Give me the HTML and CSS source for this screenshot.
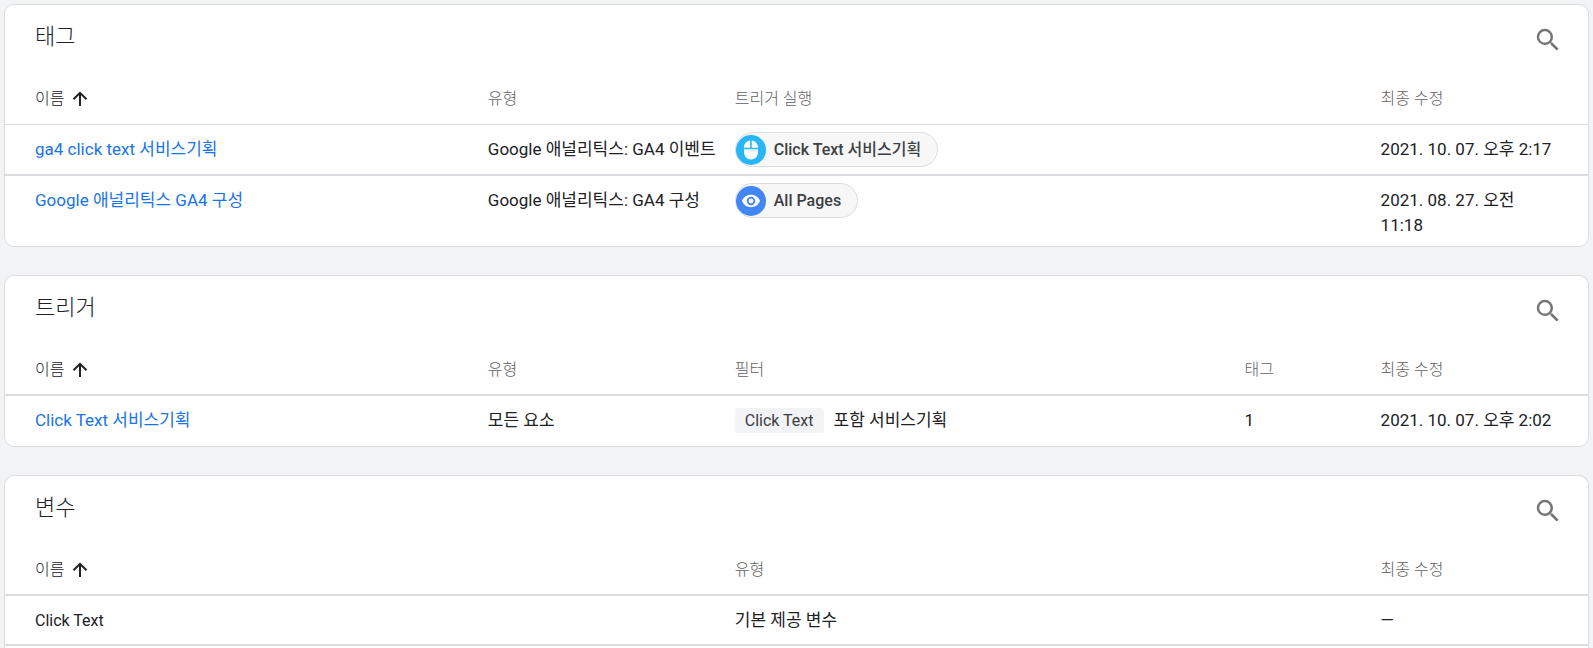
FILE: index.html
```html
<!DOCTYPE html>
<html lang="ko">
<head>
<meta charset="utf-8">
<title>태그 · 트리거 · 변수</title>
<link rel="stylesheet" href="styles.css">
</head>
<body>
<svg class="defs" aria-hidden="true">
  <symbol id="search" viewBox="0 0 24 24"><path d="M15.5 14h-.79l-.28-.27A6.47 6.47 0 0 0 16 9.5 6.5 6.5 0 1 0 9.5 16c1.61 0 3.09-.59 4.23-1.57l.27.28v.79l5 4.99L20.49 19l-4.99-5zm-6 0C7.01 14 5 11.99 5 9.5S7.01 5 9.5 5 14 7.01 14 9.5 11.99 14 9.5 14z"/></symbol>
  <symbol id="arrow" viewBox="0 0 16 16"><path d="M8 15V2M1.500 8.300 8 1.800l6.500 6.500" fill="none" stroke="currentColor" stroke-width="2"/></symbol>
</svg>
<main class="cards">
  <section class="card">
    <header class="card-head">
      <h2 class="card-title">태그</h2>
      <button class="search" type="button" aria-label="태그 검색"><svg class="search-icon"><use href="#search"/></svg></button>
    </header>
    <table class="table table-tags">
      <colgroup><col class="c-name"><col class="c-type"><col class="c-wide"><col class="c-date"></colgroup>
      <thead>
        <tr>
          <th class="sorted"><button class="sort" type="button">이름<svg class="sort-icon"><use href="#arrow"/></svg></button></th>
          <th>유형</th><th>트리거 실행</th><th>최종 수정</th>
        </tr>
      </thead>
      <tbody>
        <tr>
          <td><a class="link" href="#">ga4 click text 서비스기획</a></td>
          <td class="nowrap">Google 애널리틱스: GA4 이벤트</td>
          <td class="chip-cell"><a class="chip" href="#">
            <svg class="chip-icon" viewBox="0 0 30 30"><circle cx="15" cy="15" r="15" fill="#29b6f6"/><path fill="#fff" d="M14.200 5.500v7.200H8C8 8.700 10.500 6 14.200 5.500zM15.800 5.500c3.700.5 6.200 3.200 6.200 7.200h-6.200zM8 14.200h14v2.800c0 4.500-3 7.500-7 7.500s-7-3-7-7.500z"/></svg>
            Click Text 서비스기획</a></td>
          <td>2021. 10. 07. 오후 2:17</td>
        </tr>
        <tr>
          <td><a class="link" href="#">Google 애널리틱스 GA4 구성</a></td>
          <td class="nowrap">Google 애널리틱스: GA4 구성</td>
          <td class="chip-cell"><a class="chip" href="#">
            <svg class="chip-icon" viewBox="0 0 30 30"><circle cx="15" cy="15" r="15" fill="#4285f4"/><path fill="#fff" d="M15 8.800c-4.200 0-7.600 2.500-9 6.200 1.400 3.700 4.800 6.200 9 6.200s7.600-2.500 9-6.200c-1.400-3.700-4.800-6.200-9-6.200z"/><circle cx="15" cy="15" r="3.300" fill="#fff" stroke="#4285f4" stroke-width="1.800"/></svg>
            All Pages</a></td>
          <td>2021. 08. 27. 오전 11:18</td>
        </tr>
      </tbody>
    </table>
  </section>

  <section class="card">
    <header class="card-head">
      <h2 class="card-title">트리거</h2>
      <button class="search" type="button" aria-label="트리거 검색"><svg class="search-icon"><use href="#search"/></svg></button>
    </header>
    <table class="table">
      <colgroup><col class="c-name"><col class="c-type"><col class="c-filter"><col class="c-count"><col class="c-date"></colgroup>
      <thead>
        <tr>
          <th class="sorted"><button class="sort" type="button">이름<svg class="sort-icon"><use href="#arrow"/></svg></button></th>
          <th>유형</th><th>필터</th><th>태그</th><th>최종 수정</th>
        </tr>
      </thead>
      <tbody>
        <tr>
          <td><a class="link" href="#">Click Text 서비스기획</a></td>
          <td>모든 요소</td>
          <td><span class="filter"><span class="token">Click Text</span>포함 서비스기획</span></td>
          <td>1</td>
          <td>2021. 10. 07. 오후 2:02</td>
        </tr>
      </tbody>
    </table>
  </section>

  <section class="card card-open">
    <header class="card-head">
      <h2 class="card-title">변수</h2>
      <button class="search" type="button" aria-label="변수 검색"><svg class="search-icon"><use href="#search"/></svg></button>
    </header>
    <table class="table">
      <colgroup><col class="c-variable"><col class="c-wide"><col class="c-date"></colgroup>
      <thead>
        <tr>
          <th class="sorted"><button class="sort" type="button">이름<svg class="sort-icon"><use href="#arrow"/></svg></button></th>
          <th>유형</th><th>최종 수정</th>
        </tr>
      </thead>
      <tbody>
        <tr><td class="latin">Click Text</td><td>기본 제공 변수</td><td>—</td></tr>
      </tbody>
    </table>
  </section>
</main>
</body>
</html>
```
FILE: styles.css
```css
* { box-sizing: border-box; }

body {
  margin: 0;
  background: #f1f3f4;
  color: #202124;
  font: 17px/25px Roboto, "Noto Sans CJK KR", sans-serif;
}

.defs { display: none; }

.cards {
  display: flex;
  flex-direction: column;
  gap: 28px;
  padding: 4px 4px 0;
}

.card {
  background: #fff;
  border: 1px solid #dadce0;
  border-radius: 10px;
  overflow: hidden;
}

.card-open {
  padding-bottom: 2px;
  border-bottom: 0;
  border-radius: 10px 10px 0 0;
}

.card-head {
  display: flex;
  justify-content: space-between;
  align-items: flex-start;
  padding: 20px 25px 19px 30px;
}

.card-title {
  margin: 0;
  font-size: 22px;
  font-weight: 300;
  line-height: 24px;
}

button {
  padding: 0;
  border: 0;
  background: none;
  color: inherit;
  font: inherit;
  cursor: pointer;
}

.search {
  width: 30px;
  height: 30px;
  color: #757575;
}

.search-icon {
  display: block;
  width: 30px;
  height: 30px;
  fill: currentColor;
}

.table {
  width: 100%;
  table-layout: fixed;
  border-collapse: separate;
  border-spacing: 0;
}

.c-name { width: 30.5%; }
.c-type { width: 15.6%; }
.c-filter { width: 32.2%; }
.c-count { width: 8.6%; }
.c-variable { width: 46.1%; }
.c-wide { width: 40.8%; }
.c-date { width: 13.1%; }

th {
  height: 51px;
  padding: 12px 12px 0 0;
  border-bottom: 2px solid #dadce0;
  color: #616161;
  font-size: 16px;
  font-weight: 300;
  text-align: left;
  vertical-align: top;
}

.table-tags th { border-bottom-width: 1px; }

th.sorted { color: #202124; }

td {
  height: 50px;
  padding: 12px 12px 8px 0;
  border-bottom: 2px solid #dadce0;
  vertical-align: top;
}

.card:not(.card-open) tbody tr:last-child td { border-bottom: 0; }

th:first-child,
td:first-child { padding-left: 30px; }

td:last-child { padding-right: 30px; }

.nowrap { white-space: nowrap; padding-right: 0; }

.latin { font-size: 16px; }

.sort {
  display: flex;
  align-items: center;
  gap: 8px;
}

.sort-icon {
  width: 16px;
  height: 16px;
}

.link {
  color: #1a73e8;
  text-decoration: none;
}

.chip-cell { padding: 7px 0; }

.chip {
  display: flex;
  align-items: center;
  gap: 8px;
  width: fit-content;
  height: 35px;
  padding: 0 16px 0 0;
  border: 1px solid #dadce0;
  border-radius: 18px;
  background: #f7f7f7;
  color: #3c4043;
  font-size: 16px;
  font-weight: 500;
  text-decoration: none;
}

.chip-icon {
  width: 30px;
  height: 30px;
}

.filter {
  display: flex;
  align-items: center;
  gap: 10px;
}

.token {
  padding: 0 10px;
  border-radius: 3px;
  background: #f1f3f4;
  color: #3c4043;
  font-size: 16px;
}
```
